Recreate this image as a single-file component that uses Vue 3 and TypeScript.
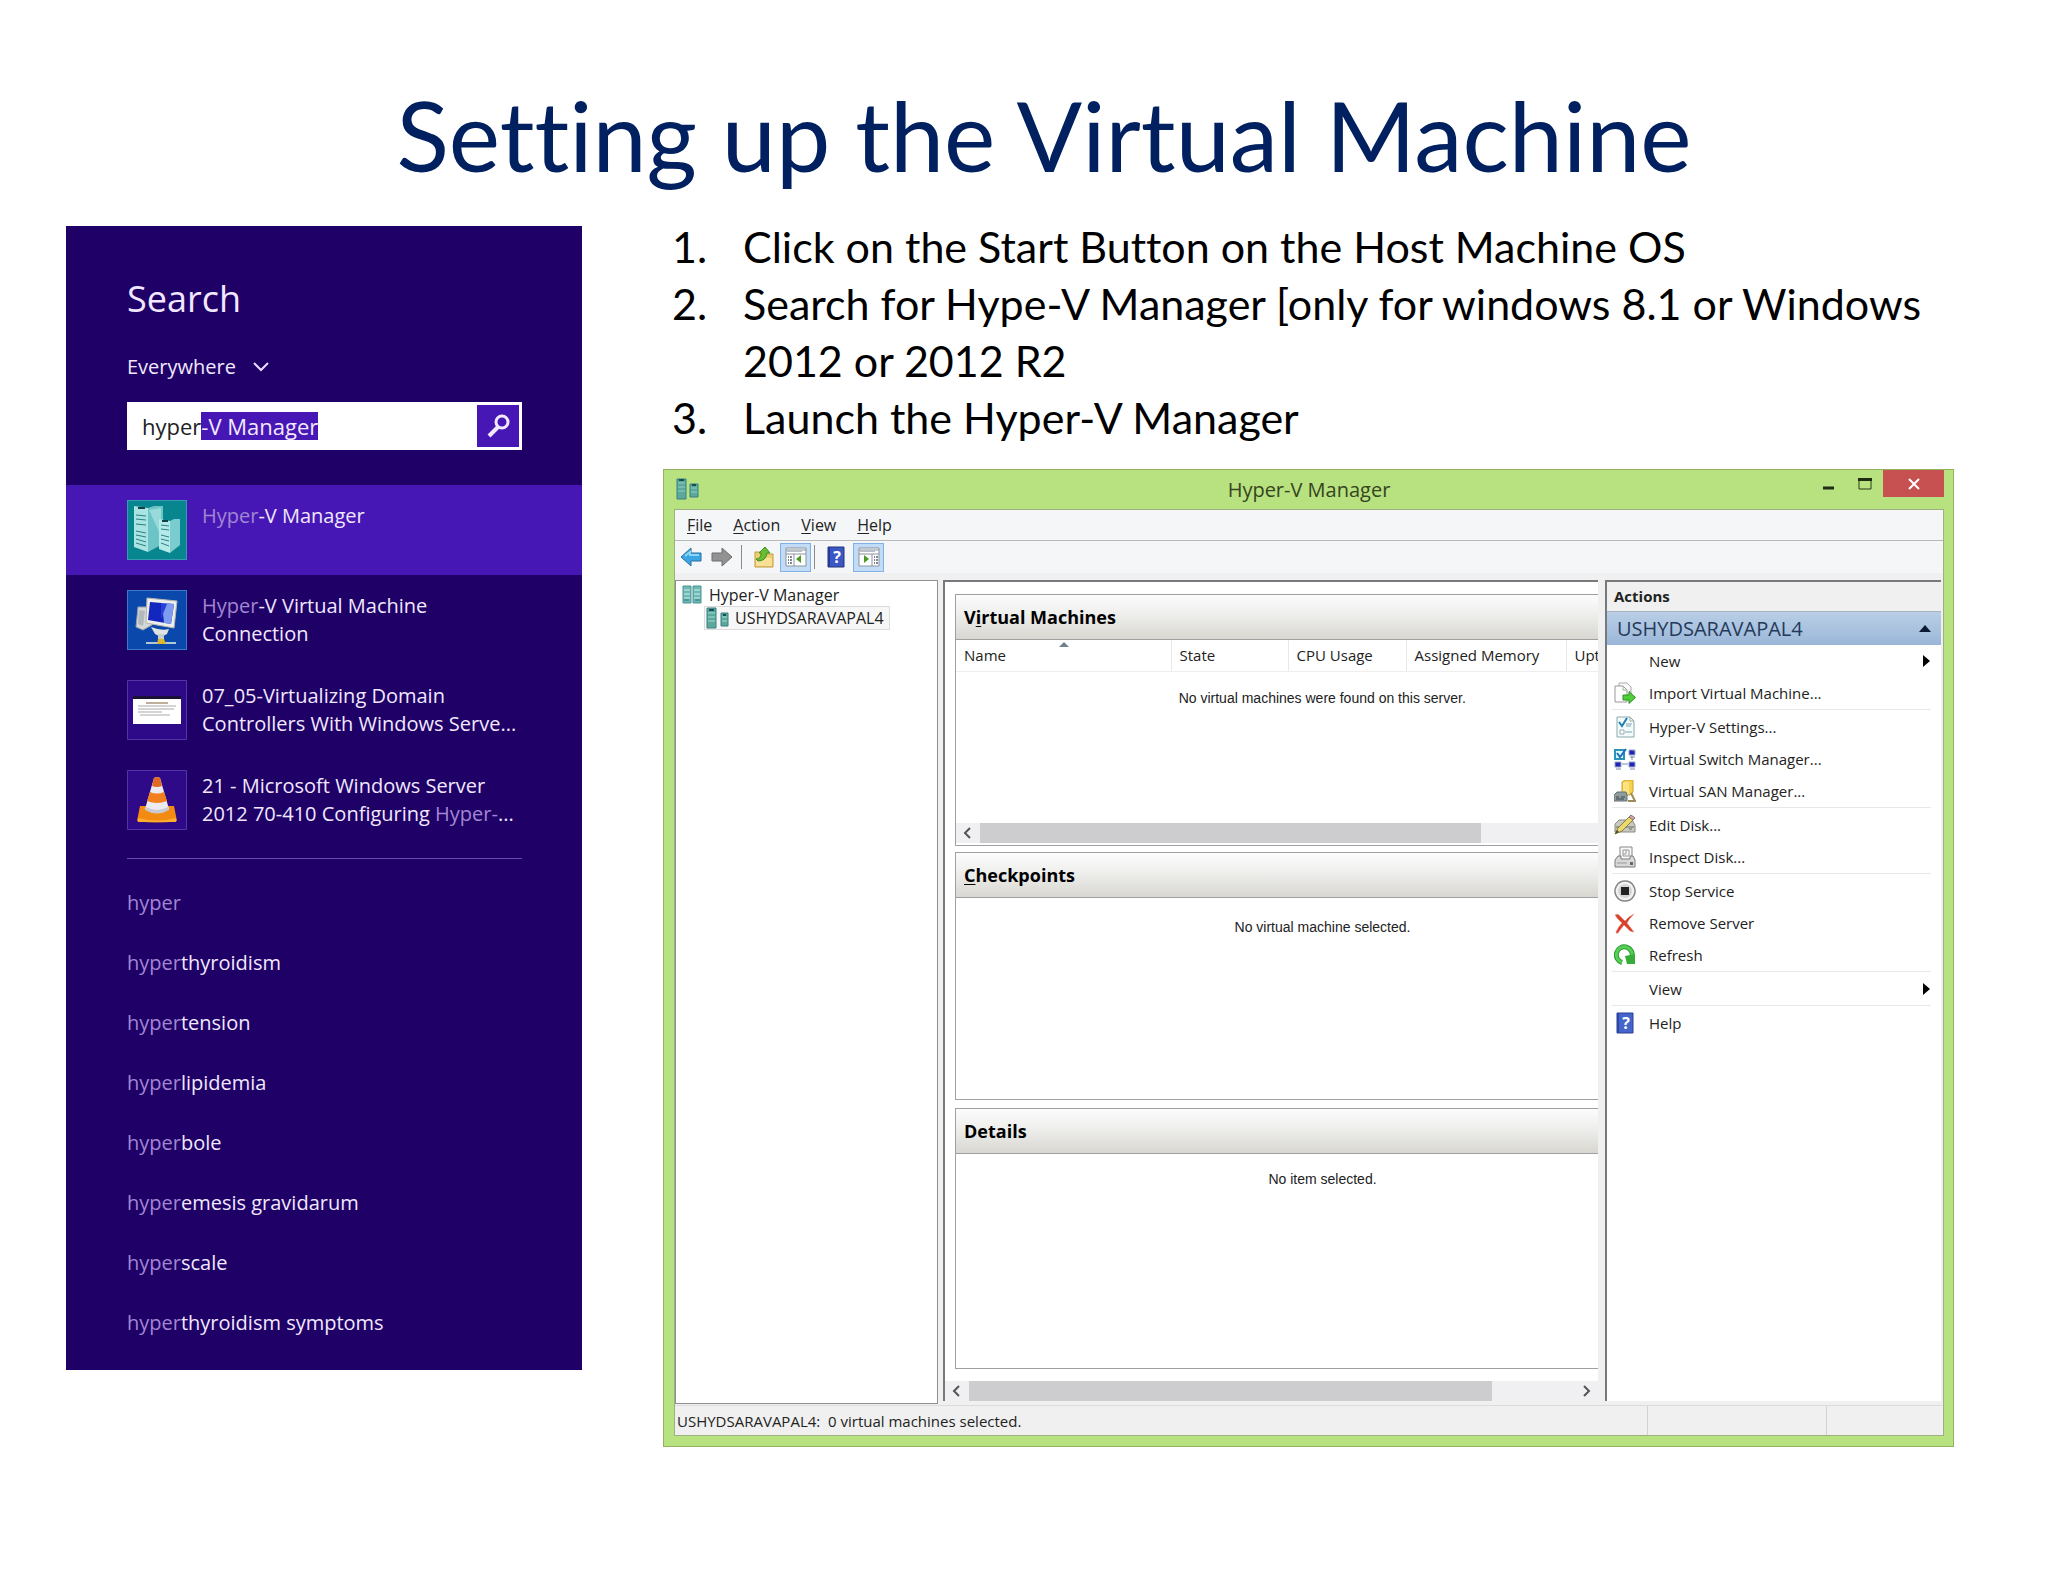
<script setup lang="ts">
import { onMounted, ref } from 'vue'

interface Shape { d: string; fill?: string; stroke?: string; w?: number }
interface Result { icon: string; parts: { text: string; dim?: boolean }[][]; active?: boolean }
interface Action { label: string; icon?: string; submenu?: boolean; divider?: boolean }

const query = ref('hyper-V Manager')
const scope = ref('Everywhere')
const searchBox = ref<HTMLInputElement | null>(null)

onMounted(() => {
  searchBox.value?.focus({ preventScroll: true })
  searchBox.value?.setSelectionRange(5, query.value.length)
})

const steps: string[] = [
  'Click on the Start Button on the Host Machine OS',
  'Search for Hype-V Manager [only for windows 8.1 or Windows 2012 or 2012 R2',
  'Launch the Hyper-V Manager',
]

const results: Result[] = [
  { icon: 'servers', active: true, parts: [[{ text: 'Hyper', dim: true }, { text: '-V Manager' }]] },
  { icon: 'monitor', parts: [[{ text: 'Hyper', dim: true }, { text: '-V Virtual Machine' }], [{ text: 'Connection' }]] },
  { icon: 'slide', parts: [[{ text: '07_05-Virtualizing Domain' }], [{ text: 'Controllers With Windows Serve...' }]] },
  { icon: 'cone', parts: [[{ text: '21 - Microsoft Windows Server' }], [{ text: '2012 70-410 Configuring ' }, { text: 'Hyper-', dim: true }, { text: '...' }]] },
]

const suggestions: string[] = ['', 'thyroidism', 'tension', 'lipidemia', 'bole', 'emesis gravidarum', 'scale', 'thyroidism symptoms']

const menus: [string, string][] = [['F', 'ile'], ['A', 'ction'], ['V', 'iew'], ['H', 'elp']]

const actions: Action[] = [
  { label: 'New', submenu: true },
  { label: 'Import Virtual Machine...', icon: 'import', divider: true },
  { label: 'Hyper-V Settings...', icon: 'settings' },
  { label: 'Virtual Switch Manager...', icon: 'network' },
  { label: 'Virtual SAN Manager...', icon: 'san', divider: true },
  { label: 'Edit Disk...', icon: 'edit' },
  { label: 'Inspect Disk...', icon: 'inspect', divider: true },
  { label: 'Stop Service', icon: 'stop' },
  { label: 'Remove Server', icon: 'remove' },
  { label: 'Refresh', icon: 'refresh', divider: true },
  { label: 'View', submenu: true, divider: true },
  { label: 'Help', icon: 'help' },
]

/* Small action glyphs on a 22 x 22 grid */
const glyphs: Record<string, Shape[]> = {
  import: [
    { d: 'M5 1h8l4 4v12H5z', fill: '#fafafa', stroke: '#aaa' },
    { d: 'M1 4h8l4 4v12H1z', fill: '#fff', stroke: '#999' },
    { d: 'M9 4v4h4', stroke: '#aaa' },
    { d: 'M9 13h6V9.500l6.500 6L15 21.500V18H9z', fill: '#4fce38', stroke: '#2f8f22' },
  ],
  settings: [
    { d: 'M3 1h13l4 4v16H3z', fill: '#f3fafc', stroke: '#8aa' },
    { d: 'M16 1v4h4', stroke: '#9aa' },
    { d: 'M12 8h6M12 10h5M11 16h7', stroke: '#7fa6b0' },
    { d: 'M5 6l3 4 5-8', stroke: '#1d7fae', w: 2 },
    { d: 'M6 14h4v4H6z', fill: '#fff', stroke: '#9aa' },
  ],
  network: [
    { d: 'M1 2h9v9H1z', fill: '#e4f8fb', stroke: '#2a95b5', w: 2 },
    { d: 'M3 5l3 4 6-8', stroke: '#1b6fc0', w: 2 },
    { d: 'M15 2h6v5h-6zM1 14h6v5H1zM15 14h6v5h-6z', fill: '#2222b4', stroke: '#8fa6cc' },
    { d: 'M18 2h3v2z', fill: '#88a' },
    { d: 'M18 8v4M8 16h6M2 21h5M16 21h5M16 9h5', stroke: '#7c8cab' },
  ],
  san: [
    { d: 'M8 2l3-2h8v12l-3 3H8z', fill: '#f5d14c', stroke: '#cf9f28' },
    { d: 'M9 2h6v12H9z', fill: '#fae382' },
    { d: 'M17 13l4 8h-7', stroke: '#9b8b58', w: 2 },
    { d: 'M0 15l3-3h9l1 3v6H0z', fill: '#8e9c9e', stroke: '#657172' },
    { d: 'M2 17h3M7 17h4M2 19h8', stroke: '#394849' },
  ],
  edit: [
    { d: 'M1 10l4-4h13l3 5v7H1z', fill: '#c9c9c2', stroke: '#8a8a82' },
    { d: 'M2 13h18M15 15h3', stroke: '#666' },
    { d: 'M1 20l3-6L16 2l4 3L8 17z', fill: '#ead870', stroke: '#8d7d30' },
    { d: 'M15 3l2-2 4 3-2 2z', fill: '#c9a9a5', stroke: '#88706c' },
    { d: 'M1 20l2-4 2 2z', fill: '#444' },
  ],
  inspect: [
    { d: 'M6 1h12v13H6z', fill: '#f8f8f8', stroke: '#878787' },
    { d: 'M9 4h6v6H9zM9 8h3V4', stroke: '#999' },
    { d: 'M1 14l3-4h3v3h9v-3h3l2 4v7H1z', fill: '#d8d8d8', stroke: '#7a7a7a' },
    { d: 'M3 17h10', stroke: '#999' },
    { d: 'M16 16h3v3h-3z', fill: '#666' },
  ],
  stop: [
    { d: 'M11 1a10 10 0 1 0 .010 0z', fill: '#f2f2f2', stroke: '#858585', w: 1.500 },
    { d: 'M11 4a7 7 0 1 0 .010 0z', fill: '#d5d5d5' },
    { d: 'M7 7h8v8H7z', fill: '#222' },
  ],
  remove: [
    { d: 'M1 3q3-2 5 1l5 5q4-5 9-7-5 5-7 9l7 9q-4 0-6-3l-4-4q-4 5-6 8-2 1-2-1 2-5 6-9-5-4-7-8z', fill: '#d9402c', stroke: '#e79283', w: 0.500 },
  ],
  refresh: [
    { d: 'M8 18.500A8 8 0 1 1 18 13', stroke: '#2a9b31', w: 5 },
    { d: 'M8 18.500A8 8 0 1 1 18 13', stroke: '#55cf55', w: 3 },
    { d: 'M11 12l10-2v10h-8z', fill: '#36ad38' },
  ],
}
</script>

<template>
  <main class="slide">
    <h1>Setting up the Virtual Machine</h1>
    <div class="columns">
      <section class="search" aria-label="Search">
        <h2>Search</h2>
        <div class="scope">
          <select v-model="scope" aria-label="Search scope"><option>Everywhere</option></select>
          <svg width="16" height="10" viewBox="0 0 16 10"><path d="M1 1l7 7 7-7" fill="none" stroke="#e8dcff" stroke-width="2" /></svg>
        </div>
        <form class="box" @submit.prevent>
          <input ref="searchBox" v-model="query" type="text" aria-label="Search text" spellcheck="false" />
          <button type="submit" aria-label="Search">
            <svg width="26" height="26" viewBox="0 0 26 26"><circle cx="17" cy="9" r="6" fill="none" stroke="#f3e9ff" stroke-width="3" /><path d="M13 14l-9 9" stroke="#f3e9ff" stroke-width="4" /></svg>
          </button>
        </form>
        <ul class="results">
          <li v-for="(r, i) in results" :key="i" :class="{ active: r.active }">
            <svg v-if="r.icon === 'servers'" class="tile" viewBox="0 0 60 60">
              <path d="M0 0h60v60H0z" fill="#07868f" />
              <path d="M7 6l14 2v44L7 47z" fill="#a9e3e2" /><path d="M21 8l6-2h9v38l-15 8z" fill="#6cc4c6" />
              <path d="M22 10l12-2v28z" fill="#97dad9" />
              <path d="M9 15l10 1M9 19l10 1M9 24l10 1M9 31l10 2M9 35l10 2M9 39l10 3M9 43l10 3" stroke="#2a7f85" stroke-width="1" />
              <path d="M11 8h7" stroke="#123f48" stroke-width="2" />
              <path d="M32 19l11 2v32l-11-4z" fill="#b4ebe9" /><path d="M43 21l4-2h6v26l-10 8z" fill="#7accce" />
              <path d="M34 25l8 1M34 29l8 1M34 35l8 2M34 39l8 2M34 43l8 3" stroke="#2a7f85" stroke-width="1" />
              <path d="M35 21h6" stroke="#123f48" stroke-width="2" />
              <path d="M0 .500h60M0 59.500h60M.500 0v60M59.500 0v60" stroke="#379bb0" />
            </svg>
            <svg v-else-if="r.icon === 'monitor'" class="tile" viewBox="0 0 60 60">
              <path d="M0 0h60v60H0z" fill="#0b48ab" />
              <path d="M11 17h10l4 18-9 5-7-3z" fill="#d5d8d8" stroke="#959fa8" /><path d="M12 20l6 1-2 15-5-2z" fill="#b2b9bd" />
              <path d="M20 8l30 3-3 27-28-5z" fill="#eeeeea" stroke="#b5b5ae" />
              <path d="M23 12l24 2-3 20-23-4z" fill="#1327be" /><path d="M35 13l12 1-3 20-7-1z" fill="#7e9df0" /><path d="M34 13l6 1-6 15z" fill="#2840d8" />
              <path d="M24 37q10 4 18 2l-2 5q-6 4-12 0z" fill="#dfe2e0" />
              <path d="M31 44h6v5h-6z" fill="#c8cdd0" /><path d="M19 53h30" stroke="#b0c8d5" stroke-width="2" /><path d="M31 49h6l2 5h-9z" fill="#e0b52b" />
              <path d="M0 .500h60M0 59.500h60M.500 0v60M59.500 0v60" stroke="#3f7ac6" />
            </svg>
            <svg v-else-if="r.icon === 'slide'" class="tile" viewBox="0 0 60 60">
              <path d="M.500 .500h59v59H.500z" fill="#2e0a88" stroke="#5434a4" />
              <path d="M6 16h48v4H6z" fill="#1b1038" /><path d="M6 19h48v25H6z" fill="#fff" />
              <path d="M19 23h22" stroke="#bfae9a" stroke-width="2" /><path d="M11 26h38M11 29h36M11 32h24M13 35h30" stroke="#aaa" />
            </svg>
            <svg v-else class="tile" viewBox="0 0 60 60">
              <path d="M.500 .500h59v59H.500z" fill="#2e0a88" stroke="#5434a4" />
              <path d="M13 36h34l3 15q-20 3-40 0z" fill="#f38b13" /><path d="M11 48q19 5 38 0v4H11z" fill="#ffad2c" />
              <path d="M27 8q3-2 6 0l9 31q-12 8-24 0z" fill="#ececf0" />
              <path d="M27 8q3-2 6 0l2 8q-5 2-10 0z" fill="#e06a22" /><path d="M23 22q7 3 14 0l3 9q-10 4-20 0z" fill="#f2801e" />
              <path d="M19 37q11 6 22 0l1 3q-12 7-24 0z" fill="#c9c9d4" />
            </svg>
            <a href="#" @click.prevent>
              <span v-for="(line, j) in r.parts" :key="j" class="line"><span v-for="(p, k) in line" :key="k" :class="{ dim: p.dim }">{{ p.text }}</span></span>
            </a>
          </li>
        </ul>
        <hr />
        <ul class="suggestions">
          <li v-for="s in suggestions" :key="s"><a href="#" @click.prevent><span class="dim">hyper</span>{{ s }}</a></li>
        </ul>
      </section>

      <div class="right">
        <ol class="steps">
          <li v-for="s in steps" :key="s">{{ s }}</li>
        </ol>

        <section class="window" aria-label="Hyper-V Manager">
          <header class="titlebar">
            <svg class="appicon" width="24" height="24" viewBox="0 0 24 24">
              <path d="M1 2h9v20H1zM14 7h8v13h-8z" fill="#5aa99c" stroke="#3c7f83" />
              <path d="M2 6h7M2 10h7M2 14h7M15 11h6M15 15h6" stroke="#8fcdbf" stroke-width="1" /><path d="M3 3h5M16 8h4" stroke="#174d55" stroke-width="2" />
            </svg>
            <span class="caption">Hyper-V Manager</span>
            <div class="winbuttons">
              <button type="button" aria-label="Minimize"><svg width="12" height="14" viewBox="0 0 12 14"><path d="M1 12h11" stroke="#1f2b12" stroke-width="3" /></svg></button>
              <button type="button" aria-label="Maximize"><svg width="14" height="14" viewBox="0 0 14 14"><path d="M1 3h12v10H1z" fill="none" stroke="#2b3d18" stroke-width="1" /><path d="M0 3.500h14" stroke="#1f2b12" stroke-width="3" /></svg></button>
              <button type="button" class="close" aria-label="Close"><svg width="12" height="12" viewBox="0 0 12 12"><path d="M1 1l10 10M11 1L1 11" stroke="#fff" stroke-width="2" /></svg></button>
            </div>
          </header>

          <div class="client">
            <nav class="menubar"><button v-for="[k, rest] in menus" :key="k" type="button"><u>{{ k }}</u>{{ rest }}</button></nav>
            <div class="toolbar">
              <button type="button" aria-label="Back"><svg width="22" height="22" viewBox="0 0 22 22"><path d="M1 11L11 2v5h10v8H11v5z" fill="#39a5e3" stroke="#2b6f9f" /><path d="M5 10l5-4v3h9" fill="none" stroke="#8ed6f7" stroke-width="2" /></svg></button>
              <button type="button" class="forward" aria-label="Forward"><svg width="22" height="22" viewBox="0 0 22 22"><path d="M21 11L11 2v5H1v8h10v5z" fill="#929292" stroke="#6c6c6c" /></svg></button>
              <i class="sep"></i>
              <button type="button" class="folder" aria-label="Up one level"><svg width="22" height="22" viewBox="0 0 22 22"><path d="M2 6h7l2 2h9v13H2z" fill="#f0cf70" stroke="#c59a3a" /><path d="M3 12h16v8H3z" fill="#f8e096" /><path d="M3 13q5 0 5-6H6l6-6 5 6h-3q-1 8-9 8z" fill="#68bd35" stroke="#3f8f1e" /></svg></button>
              <button type="button" class="on" aria-label="Show or hide console tree"><svg width="22" height="20" viewBox="0 0 22 20"><path d="M1 1h20v18H1z" fill="#fff" stroke="#8a93a0" /><path d="M1 3h20M1 7h20M9 7v12" stroke="#8a93a0" stroke-width="1" /><path d="M2 4h15" stroke="#b9c0c9" stroke-width="2" /><path d="M3 10h4M3 13h4M3 16h4" stroke="#7d8894" stroke-width="2" stroke-dasharray="1 1 2 0" /><path d="M16 8v8l-5-4z" fill="#4b9a26" /></svg></button>
              <i class="sep"></i>
              <button type="button" class="help" aria-label="Help"><svg width="18" height="22" viewBox="0 0 18 22"><path d="M1 1h16v20H1z" fill="#3b57c4" stroke="#26357c" /><path d="M2 1v20" stroke="#233a9a" stroke-width="2" /><text x="10" y="17" text-anchor="middle" class="q">?</text></svg></button>
              <button type="button" class="on" aria-label="Show or hide action pane"><svg width="22" height="20" viewBox="0 0 22 20"><path d="M1 1h20v18H1z" fill="#fff" stroke="#8a93a0" /><path d="M1 3h20M1 7h20M14 7v12" stroke="#8a93a0" stroke-width="1" /><path d="M2 4h15" stroke="#b9c0c9" stroke-width="2" /><path d="M16 10h4M16 13h4M16 16h4" stroke="#7d8894" stroke-width="2" stroke-dasharray="1 1 2 0" /><path d="M6 8v8l5-4z" fill="#4b9a26" /></svg></button>
            </div>

            <div class="panes">
              <aside class="tree">
                <div class="node root">
                  <svg width="20" height="20" viewBox="0 0 20 20"><path d="M1 1h8v17H1zM11 1h8v17h-8z" fill="#6db9b4" stroke="#4d9394" /><path d="M2 5h6M2 9h6M2 13h6M12 5h6M12 9h6M12 13h6" stroke="#cdf0ea" stroke-width="1" /><path d="M2 15h5M13 15h5" stroke="#2a7379" /></svg>
                  <span>Hyper-V Manager</span>
                </div>
                <div class="node child">
                  <svg width="24" height="22" viewBox="0 0 24 22"><path d="M1 1h9v20H1zM15 6h7v13h-7z" fill="#5aa99c" stroke="#3c7f83" /><path d="M2 6h7M2 10h7M2 14h7M16 10h5M16 14h5" stroke="#a4dccf" stroke-width="1" /><path d="M3 3h5M17 8h3" stroke="#174d55" stroke-width="2" /></svg>
                  <span>USHYDSARAVAPAL4</span>
                </div>
              </aside>

              <div class="middle">
                <div class="stack">
                  <section class="group">
                    <h3>V<u>i</u>rtual Machines</h3>
                    <table>
                      <colgroup><col class="c-name" /><col class="c-state" /><col class="c-cpu" /><col class="c-mem" /><col /></colgroup>
                      <thead>
                        <tr><th scope="col" class="sorted">Name<svg width="10" height="6" viewBox="0 0 10 6"><path d="M0 6l5-5 5 5z" fill="#71808d" /></svg></th><th scope="col">State</th><th scope="col">CPU Usage</th><th scope="col">Assigned Memory</th><th scope="col" abbr="Uptime">Upt</th></tr>
                      </thead>
                      <tbody><tr><td colspan="5">No virtual machines were found on this server.</td></tr></tbody>
                    </table>
                    <div class="hscroll">
                      <svg width="8" height="12" viewBox="0 0 8 12"><path d="M7 1L2 6l5 5" fill="none" stroke="#555" stroke-width="2" /></svg>
                      <i class="thumb"></i>
                    </div>
                  </section>
                  <section class="group checkpoints">
                    <h3><u>C</u>heckpoints</h3>
                    <p>No virtual machine selected.</p>
                  </section>
                  <section class="group details">
                    <h3>Details</h3>
                    <p>No item selected.</p>
                  </section>
                </div>
                <div class="hscroll outer">
                  <svg width="8" height="12" viewBox="0 0 8 12"><path d="M7 1L2 6l5 5" fill="none" stroke="#555" stroke-width="2" /></svg>
                  <i class="thumb"></i>
                  <svg class="end" width="8" height="12" viewBox="0 0 8 12"><path d="M1 1l5 5-5 5" fill="none" stroke="#555" stroke-width="2" /></svg>
                </div>
              </div>

              <aside class="actions">
                <h3>Actions</h3>
                <div class="host"><span>USHYDSARAVAPAL4</span><svg width="12" height="7" viewBox="0 0 12 7"><path d="M0 7l6-7 6 7z" fill="#0b1a33" /></svg></div>
                <ul>
                  <li v-for="a in actions" :key="a.label" :class="{ divider: a.divider }">
                    <button type="button">
                      <span class="glyph">
                        <svg v-if="a.icon === 'help'" width="18" height="22" viewBox="0 0 18 22"><path d="M1 1h16v20H1z" fill="#4565cc" stroke="#2c3f8e" /><path d="M2 1v20" stroke="#2c46a8" stroke-width="2" /><text x="10" y="17" text-anchor="middle" class="q">?</text></svg>
                        <svg v-else-if="a.icon" width="22" height="22" viewBox="0 0 22 22"><path v-for="(s, i) in glyphs[a.icon]" :key="i" :d="s.d" :fill="s.fill ?? 'none'" :stroke="s.stroke" :stroke-width="s.w ?? 1" /></svg>
                      </span>
                      <span>{{ a.label }}</span>
                      <svg v-if="a.submenu" class="more" width="7" height="12" viewBox="0 0 7 12"><path d="M0 0l7 6-7 6z" fill="#000" /></svg>
                    </button>
                  </li>
                </ul>
              </aside>
            </div>

            <footer class="status"><span class="msg">USHYDSARAVAPAL4:&nbsp; 0 virtual machines selected.</span><span class="cell wide"></span><span class="cell"></span></footer>
          </div>
        </section>
      </div>
    </div>
  </main>
</template>

<style>
body { margin: 0; background: #fff; }
</style>

<style scoped>
* { box-sizing: border-box; }
.slide { padding: 80px 94px 136px 66px; font-family: "Open Sans", "Noto Sans", sans-serif; color: #000; }
h1, h2, h3, p, ul, ol { margin: 0; padding: 0; font-weight: 400; }
ul, ol { list-style: none; }
svg { display: block; flex: none; }
button { margin: 0; padding: 0; border: 0; background: none; font: inherit; color: inherit; }
a { color: inherit; text-decoration: none; }
h1 { margin: 0 0 28px 68px; font: 400 97px/110px Lato, sans-serif; font-variant-ligatures: none; color: #002060; text-align: center; }
.columns { display: grid; grid-template-columns: 516fr 1291fr; gap: 81px; align-items: start; }

.search { margin-top: 8px; padding: 49px 0 17px; background: #1e0066; color: #f1e8ff; font-size: 20px; line-height: 28px; }
.search h2 { padding-left: 61px; font-size: 36px; line-height: 48px; }
.scope { display: flex; align-items: center; margin-top: 30px; padding-left: 61px; }
.scope select { appearance: none; width: 126px; height: 28px; padding: 0; border: 0; background: none; color: inherit; font: inherit; }
.box { display: flex; height: 48px; margin: 21px 60px 0 61px; padding: 3px; background: #fff; }
.box input { flex: 1; min-width: 0; padding: 0 12px; border: 0; outline: 0; background: none; color: #222; font: inherit; font-size: 22px; caret-color: transparent; }
.box input::selection { background: #4617b4; color: #f3e9ff; }
.box button { display: grid; place-items: center; width: 42px; background: #4617b4; }
.results { margin-top: 35px; }
.results li { display: flex; gap: 15px; height: 90px; padding: 15px 0 0 61px; }
.results a { padding-top: 2px; }
.results .active { background: #4617b4; }
.tile { width: 60px; height: 60px; }
.line { display: block; white-space: pre; }
.dim { color: #a286d4; }
.search hr { height: 1px; margin: 13px 60px 14px 61px; border: 0; background: #6a48b0; }
.suggestions li { padding-left: 61px; line-height: 60px; }

.steps { padding-left: 80px; font: 400 43px/57px Lato, sans-serif; font-variant-ligatures: none; counter-reset: step; }
.steps li { counter-increment: step; }
.steps li::before { content: counter(step) "."; float: left; margin-left: -71px; }

.window { margin-top: 23px; padding: 0 9px 10px 10px; border: 1px solid #93b35f; background: #b8e17f; font-size: 16px; color: #222; }
.titlebar { display: grid; grid-template-columns: 1fr auto 1fr; height: 39px; }
.appicon { margin: 7px 0 0 2px; }
.caption { font-size: 20px; line-height: 40px; color: #35451f; }
.winbuttons { display: flex; justify-content: flex-end; }
.winbuttons button { display: grid; place-items: center; width: 37px; height: 26px; }
.winbuttons .close { width: 61px; height: 27px; background: #c75050; }
.client { border: 1px solid #9db080; background: #f0f0f0; }
.menubar { display: flex; gap: 21px; height: 31px; padding-left: 12px; border-bottom: 1px solid #b9b9bd; background: #f5f6f8; line-height: 30px; }
u { text-underline-offset: 2px; }
.toolbar { display: flex; align-items: center; height: 32px; margin-bottom: 7px; padding-left: 5px; background: #f5f6f8; }
.toolbar .forward { margin-left: 9px; }
.toolbar .sep { width: 1px; height: 24px; margin: 0 3px 0 8px; background: #8b8b8b; }
.toolbar .folder { margin: 0 5px 0 8px; }
.toolbar .on { display: grid; place-items: center; width: 31px; height: 29px; border: 1px solid #7fb0e6; background: #c2dcf5; }
.toolbar .on + .sep { margin: 0 12px 0 3px; }
.toolbar .help { margin-right: 8px; }
.q { font: 700 16px "Open Sans", sans-serif; fill: #fff; }
.panes { display: flex; align-items: stretch; padding-right: 2px; }
.tree { flex: 0 0 263px; margin-right: 5px; padding: 3px 6px; border: 1px solid #8d8f94; background: #fff; }
.node { display: flex; align-items: center; font-size: 16px; line-height: 22px; }
.node.root { gap: 7px; }
.node.child { gap: 5px; width: max-content; margin-left: 22px; padding: 0 5px 0 1px; border: 1px solid #dcdcdc; background: #f7f7f7; }
.middle { flex: 1; min-width: 0; display: flex; flex-direction: column; margin-bottom: 3px; overflow: hidden; border-top: 2px solid #77797d; border-left: 2px solid #77797d; background: #fff; }
.stack { width: calc(100% + 92px); padding: 12px 0 0 10px; }
.group { min-height: 252px; margin-bottom: 6px; border: 1px solid #a0a0a4; background: #fff; }
.group h3 { height: 45px; padding-left: 8px; border-bottom: 1px solid #a0a0a0; background: linear-gradient(#fcfcfd, #eeeeec 45%, #d8d7d1); color: #000; font-size: 18px; line-height: 45px; font-weight: 700; }
.group p, td { font-family: "Liberation Sans", Arial, sans-serif; font-size: 14px; text-align: center; color: #222; }
.group p { padding-top: 19px; line-height: 20px; }
.checkpoints { min-height: 248px; margin-bottom: 8px; }
.details { min-height: 261px; margin-bottom: 12px; }
.details p { padding-top: 15px; }
table { width: 100%; border-collapse: collapse; table-layout: fixed; }
.c-name { width: 215px; } .c-state { width: 117px; } .c-cpu { width: 118px; } .c-mem { width: 160px; }
th { position: relative; height: 31px; padding: 0 0 0 8px; border-right: 1px solid #e6e8ec; border-bottom: 1px solid #eee; font-size: 15px; line-height: 30px; font-weight: 400; text-align: left; white-space: nowrap; }
.sorted svg { position: absolute; top: 1px; left: 103px; }
td { height: 152px; padding: 16px 0 0; line-height: 20px; vertical-align: top; }
.hscroll { display: flex; align-items: center; height: 20px; padding-left: 7px; background: #f0f0f2; }
.hscroll .thumb { width: 69%; height: 20px; margin-left: 9px; background: #cdcccf; }
.hscroll.outer .thumb { width: 81%; }
.hscroll .end { margin: 0 7px 0 auto; }
.actions { flex: 0 0 336px; margin: 0 0 3px 7px; border-top: 2px solid #77797d; border-left: 2px solid #77797d; background: #fff; }
.actions h3 { height: 30px; padding-left: 7px; border-bottom: 1px solid #a6b4c2; background: #f0f0f0; font-size: 15px; line-height: 29px; font-weight: 700; }
.host { display: flex; align-items: center; justify-content: space-between; height: 33px; padding: 0 10px; background: linear-gradient(#bacfe6, #9ab6d8); color: #243a5a; font-size: 20px; }
.actions li.divider::after { content: ""; display: block; height: 1px; margin: 0 10px 1px 5px; background: #e8e8ea; }
.actions li button { display: flex; align-items: center; width: 100%; height: 32px; padding: 0 11px 0 7px; font-size: 15px; text-align: left; }
.glyph { display: grid; place-items: center; width: 22px; margin-right: 13px; }
.more { margin-left: auto; }
.status { display: flex; height: 30px; margin-top: 1px; border-top: 1px solid #dcdcdc; font-size: 15px; line-height: 30px; }
.msg { flex: 1; padding-left: 2px; }
.cell { width: 117px; border-left: 1px solid #d2d2d4; }
.cell.wide { width: 179px; }
</style>
